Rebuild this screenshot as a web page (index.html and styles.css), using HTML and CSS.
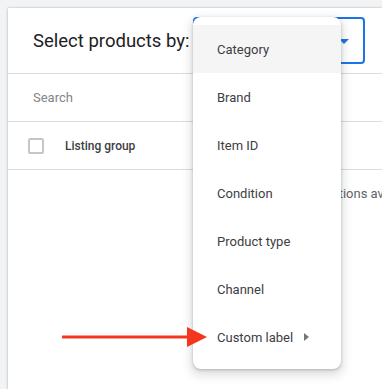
FILE: index.html
```html
<!DOCTYPE html>
<html lang="en">
<head>
  <meta charset="UTF-8">
  <meta name="viewport" content="width=device-width, initial-scale=1.0">
  <title>Select products</title>
  <link rel="stylesheet" href="styles.css">
</head>
<body>
  <div class="panel">
    <div class="panel-header">
      <h1 class="panel-title">Select products by:</h1>
      <div class="select-box">
        <span class="select-caret"></span>
      </div>
    </div>
    <div class="search-row">Search</div>
    <div class="table-head">
      <span class="checkbox"></span>
      <span class="col-title">Listing group</span>
    </div>
    <div class="empty-row">No options av</div>

    <ul class="menu">
      <li class="menu-item active">Category</li>
      <li class="menu-item">Brand</li>
      <li class="menu-item">Item ID</li>
      <li class="menu-item">Condition</li>
      <li class="menu-item">Product type</li>
      <li class="menu-item">Channel</li>
      <li class="menu-item">Custom label <span class="sub-caret"></span></li>
    </ul>
  </div>

  <svg class="pointer" width="146" height="22" viewBox="0 0 146 22">
    <rect x="0" y="9.5" width="128" height="3" fill="#f4361e"/>
    <polygon points="125,1 145,11 125,21" fill="#f4361e"/>
  </svg>
</body>
</html>
```

FILE: styles.css
```css
* {
  margin: 0;
  padding: 0;
  box-sizing: border-box;
}

body {
  font-family: Roboto, 'Liberation Sans', sans-serif;
  background: #f1f3f4;
  padding: 8px 0 0 8px;
  height: 100vh;
  overflow: hidden;
  position: relative;
}

.panel {
  position: relative;
  background: #ffffff;
  height: 100%;
  box-shadow: 0 0 2px rgba(60, 64, 67, 0.3), 0 1px 3px rgba(60, 64, 67, 0.15);
}

.panel-header {
  display: flex;
  align-items: center;
  height: 66px;
  padding-left: 25px;
  border-bottom: 1px solid #dadce0;
}

.panel-title {
  width: 160px;
  font-size: 18.5px;
  font-weight: 400;
  color: #202124;
  white-space: nowrap;
}

.select-box {
  position: relative;
  width: 172px;
  height: 47px;
  border: 2px solid #1a73e8;
  border-radius: 4px;
}

.select-caret {
  position: absolute;
  right: 14px;
  top: 20px;
  border-left: 5px solid transparent;
  border-right: 5px solid transparent;
  border-top: 5px solid #1a73e8;
}

.search-row {
  height: 48px;
  display: flex;
  align-items: center;
  padding-left: 25px;
  font-size: 13px;
  color: #80868b;
  border-bottom: 1px solid #dadce0;
}

.table-head {
  height: 48px;
  display: flex;
  align-items: center;
  padding-left: 20px;
  border-bottom: 1px solid #dadce0;
}

.checkbox {
  width: 16px;
  height: 16px;
  border: 2px solid #c4c7c9;
  border-radius: 2px;
  margin-right: 21px;
}

.col-title {
  font-size: 12px;
  font-weight: 500;
  color: #3c4043;
}

.empty-row {
  padding: 16px 0 0 296px;
  font-size: 13px;
  color: #5f6368;
  white-space: nowrap;
}

.menu {
  position: absolute;
  left: 185px;
  top: 9px;
  width: 148px;
  padding: 8px 0;
  list-style: none;
  background: #ffffff;
  border-radius: 8px;
  box-shadow: 0 1px 3px rgba(60, 64, 67, 0.3), 0 4px 8px 3px rgba(60, 64, 67, 0.15);
}

.menu-item {
  height: 48px;
  display: flex;
  align-items: center;
  padding-left: 24px;
  font-size: 13px;
  color: #3c4043;
}

.menu-item.active {
  background: #f5f5f5;
}

.sub-caret {
  margin-left: 11px;
  border-top: 4.5px solid transparent;
  border-bottom: 4.5px solid transparent;
  border-left: 5px solid #75787b;
}

.pointer {
  position: absolute;
  left: 62px;
  top: 326px;
}
```
